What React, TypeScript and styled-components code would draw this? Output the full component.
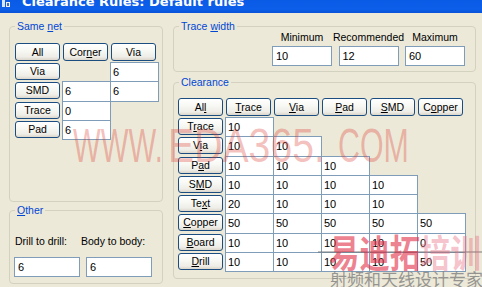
import React from "react";
import styled, { createGlobalStyle } from "styled-components";

const FONT = `"Liberation Sans", Arial, sans-serif`;

const GlobalStyle = createGlobalStyle`
  html, body { margin: 0; padding: 0; background: #ECE9D8; }
  #root { width: 482px; height: 287px; overflow: hidden; }
`;

const Window = styled.div`
  position: relative;
  width: 482px;
  height: 287px;
  overflow: hidden;
  background: #ece9d8;
  font-family: ${FONT};
  font-size: 11px;
  color: #000;
`;

const TitleBar = styled.div`
  height: 13px;
  display: flex;
  align-items: flex-start;
  gap: 11px;
  padding-left: 2px;
  overflow: hidden;
  background: linear-gradient(180deg, #0a5ae6 0%, #0c5fea 70%, #0852d6 100%);
`;

const TitleText = styled.div`
  margin-top: -6px;
  font: bold 13px/16px "DejaVu Sans", sans-serif;
  color: #fff;
  white-space: nowrap;
`;

const Body = styled.div`
  display: flex;
  gap: 10px;
  padding: 7px 0 0 9px;
`;

const Column = styled.div<{ $w: number; $gap: number }>`
  width: ${(p) => p.$w}px;
  display: flex;
  flex-direction: column;
  gap: ${(p) => p.$gap}px;
`;

const Group = styled.fieldset<{ $h: number }>`
  box-sizing: border-box;
  height: ${(p) => p.$h}px;
  margin: 0;
  padding: 0;
  min-width: 0;
  border: 1px solid #d3d1c0;
  border-radius: 4px;
`;

const Legend = styled.legend`
  margin-left: 5px;
  padding: 0 2px;
  font-size: 10.5px;
  line-height: 13px;
  color: #0046d5;
`;

const Inner = styled.div<{ $pt: number; $pl: number; $pr?: number }>`
  padding: ${(p) => p.$pt}px ${(p) => p.$pr ?? 0}px 0 ${(p) => p.$pl}px;
`;

const MatrixGrid = styled.div<{ $cols: number; $rows: number }>`
  display: grid;
  grid-template-columns: repeat(${(p) => p.$cols}, 48px);
  grid-template-rows: 19px repeat(${(p) => p.$rows}, 19.25px);
`;

const Btn = styled.button<{ $c: number; $r: number; $head?: boolean }>`
  grid-column: ${(p) => p.$c};
  grid-row: ${(p) => p.$r};
  align-self: start;
  box-sizing: border-box;
  width: 45px;
  height: ${(p) => (p.$head ? 18 : 17)}px;
  margin: ${(p) => (p.$head ? 0 : 1)}px 0 0 1px;
  padding: 0;
  border: 1px solid #1c4d80;
  border-radius: 3px;
  background: linear-gradient(180deg, #ffffff 0%, #f7f7f3 45%, #eeede7 80%, #dcd6cb 100%);
  font: 10.5px/15px ${FONT};
  color: #000;
  text-align: center;
  u { text-decoration: underline; text-underline-offset: 1px; }
`;

const Cell = styled.input<{ $c: number; $r: number }>`
  grid-column: ${(p) => p.$c};
  grid-row: ${(p) => p.$r};
  box-sizing: border-box;
  width: calc(100% + 1px);
  height: calc(100% + 1px);
  margin: 0;
  padding: 0 0 0 2px;
  border: 1px solid #7f9db9;
  background: #fff;
  font: 11px ${FONT};
  color: #000;
  outline: none;
`;

const TraceGrid = styled.div`
  display: grid;
  grid-template-columns: repeat(3, 60px);
  grid-template-rows: 13px 20px;
  column-gap: 6.5px;
  row-gap: 2px;
  justify-content: end;
  margin-top: -2px;
`;

const CenterLabel = styled.div`
  text-align: center;
  font-size: 10.5px;
  line-height: 13px;
  white-space: nowrap;
  display: flex;
  justify-content: center;
`;

const Field = styled.input`
  box-sizing: border-box;
  width: 100%;
  height: 20px;
  margin: 0;
  padding: 0 0 0 3px;
  border: 1px solid #7f9db9;
  background: #fff;
  font: 11px ${FONT};
  color: #000;
  outline: none;
`;

const OtherGrid = styled.div`
  display: grid;
  grid-template-columns: 66px 66px;
  grid-template-rows: 13px 20px;
  column-gap: 6px;
  row-gap: 9px;
`;

const SideLabel = styled.div<{ $shift: number }>`
  font-size: 10.5px;
  line-height: 13px;
  white-space: nowrap;
  margin-left: ${(p) => p.$shift}px;
`;

const Mark = styled.div<{ $x: number; $y: number; $sx: number }>`
  position: absolute;
  left: ${(p) => p.$x}px;
  top: ${(p) => p.$y}px;
  font: 49px/1 ${FONT};
  color: rgba(222, 60, 50, 0.32);
  transform: scaleX(${(p) => p.$sx});
  transform-origin: 0 0;
  white-space: nowrap;
  pointer-events: none;
`;

const Logo = styled.div`
  position: absolute;
  left: 329px;
  top: 232px;
  font: bold 38px/1 "Noto Sans CJK SC", sans-serif;
  transform: scaleX(0.8);
  transform-origin: 0 0;
  white-space: nowrap;
  pointer-events: none;
`;

const LogoPart = styled.span<{ $strong?: boolean }>`
  color: ${(p) => (p.$strong ? "rgba(225, 45, 70, 0.6)" : "rgba(235, 110, 130, 0.42)")};
`;

const LogoStripe = styled.div`
  position: absolute;
  left: 318px;
  top: 251px;
  width: 164px;
  height: 2px;
  background: rgba(110, 110, 110, 0.45);
  pointer-events: none;
`;

const Slogan = styled.div`
  position: absolute;
  left: 330px;
  top: 270px;
  font: 17px/1 "Noto Sans CJK SC", sans-serif;
  color: rgba(120, 120, 120, 0.75);
  white-space: nowrap;
  pointer-events: none;
`;

const sameNetHead = [<>All</>, <>Cor<u>n</u>er</>, <>Via</>];
const sameNetRows: { label: string; cells: (string | null)[] }[] = [
  { label: "Via", cells: [null, "6"] },
  { label: "SMD", cells: ["6", "6"] },
  { label: "Trace", cells: ["0"] },
  { label: "Pad", cells: ["6"] },
];

const clearHead = [
  <>Al<u>l</u></>,
  <><u>T</u>race</>,
  <><u>V</u>ia</>,
  <><u>P</u>ad</>,
  <><u>S</u>MD</>,
  <>C<u>o</u>pper</>,
];
const clearRows: { label: React.ReactNode; cells: string[] }[] = [
  { label: <>T<u>r</u>ace</>, cells: ["10"] },
  { label: <>V<u>i</u>a</>, cells: ["10", "10"] },
  { label: <>P<u>a</u>d</>, cells: ["10", "10", "10"] },
  { label: <>S<u>M</u>D</>, cells: ["10", "10", "10", "10"] },
  { label: <>Te<u>x</u>t</>, cells: ["20", "10", "10", "10"] },
  { label: <><u>C</u>opper</>, cells: ["50", "50", "50", "50", "50"] },
  { label: <><u>B</u>oard</>, cells: ["10", "10", "10", "10", "0"] },
  { label: <><u>D</u>rill</>, cells: ["10", "10", "10", "10", "50"] },
];

function AppIcon() {
  return (
    <svg width="9" height="8" viewBox="0 0 9 8">
      <rect x="0" y="0" width="3" height="7" fill="#d8e4f8" />
      <rect x="4" y="2" width="4" height="5" fill="#f0f0f0" />
      <rect x="5" y="3" width="2" height="3" fill="#3a6fd0" />
    </svg>
  );
}

export default function App() {
  return (
    <Window>
      <GlobalStyle />
      <TitleBar>
        <AppIcon />
        <TitleText>Clearance Rules: Default rules</TitleText>
      </TitleBar>
      <Body>
        <Column $w={154} $gap={2}>
          <Group $h={182}>
            <Legend>
              Same <u>n</u>et
            </Legend>
            <Inner $pt={10} $pl={4}>
              <MatrixGrid $cols={3} $rows={4}>
                {sameNetHead.map((h, i) => (
                  <Btn key={i} $c={i + 1} $r={1} $head>
                    {h}
                  </Btn>
                ))}
                {sameNetRows.map((row, r) => (
                  <React.Fragment key={row.label}>
                    <Btn $c={1} $r={r + 2}>
                      {row.label}
                    </Btn>
                    {row.cells.map((v, c) =>
                      v === null ? null : (
                        <Cell key={c} $c={c + 2} $r={r + 2} readOnly value={v} />
                      )
                    )}
                  </React.Fragment>
                ))}
              </MatrixGrid>
            </Inner>
          </Group>
          <Group $h={80}>
            <Legend>
              <u>O</u>ther
            </Legend>
            <Inner $pt={18} $pl={4}>
              <OtherGrid>
                <SideLabel $shift={1}>Drill to drill:</SideLabel>
                <SideLabel $shift={-5}>Body to body:</SideLabel>
                <Field readOnly value="6" />
                <Field readOnly value="6" />
              </OtherGrid>
            </Inner>
          </Group>
        </Column>
        <Column $w={303} $gap={4}>
          <Group $h={52}>
            <Legend>
              Trace <u>w</u>idth
            </Legend>
            <Inner $pt={0} $pl={0} $pr={10}>
              <TraceGrid>
                <CenterLabel>Minimum</CenterLabel>
                <CenterLabel>Recommended</CenterLabel>
                <CenterLabel>Maximum</CenterLabel>
                <Field readOnly value="10" />
                <Field readOnly value="12" />
                <Field readOnly value="60" />
              </TraceGrid>
            </Inner>
          </Group>
          <Group $h={203}>
            <Legend>Clearance</Legend>
            <Inner $pt={9} $pl={3}>
              <MatrixGrid $cols={6} $rows={8}>
                {clearHead.map((h, i) => (
                  <Btn key={i} $c={i + 1} $r={1} $head>
                    {h}
                  </Btn>
                ))}
                {clearRows.map((row, r) => (
                  <React.Fragment key={r}>
                    <Btn $c={1} $r={r + 2}>
                      {row.label}
                    </Btn>
                    {row.cells.map((v, c) => (
                      <Cell key={c} $c={c + 2} $r={r + 2} readOnly value={v} />
                    ))}
                  </React.Fragment>
                ))}
              </MatrixGrid>
            </Inner>
          </Group>
        </Column>
      </Body>

      <Mark $x={73} $y={121} $sx={0.6}>WWW.</Mark>
      <Mark $x={168} $y={121} $sx={0.8}>EDA365.</Mark>
      <Mark $x={338} $y={121} $sx={0.62}>COM</Mark>
      <LogoStripe />
      <Logo>
        <LogoPart $strong>易迪拓</LogoPart>
        <LogoPart>培训</LogoPart>
      </Logo>
      <Slogan>射频和天线设计专家</Slogan>
    </Window>
  );
}
